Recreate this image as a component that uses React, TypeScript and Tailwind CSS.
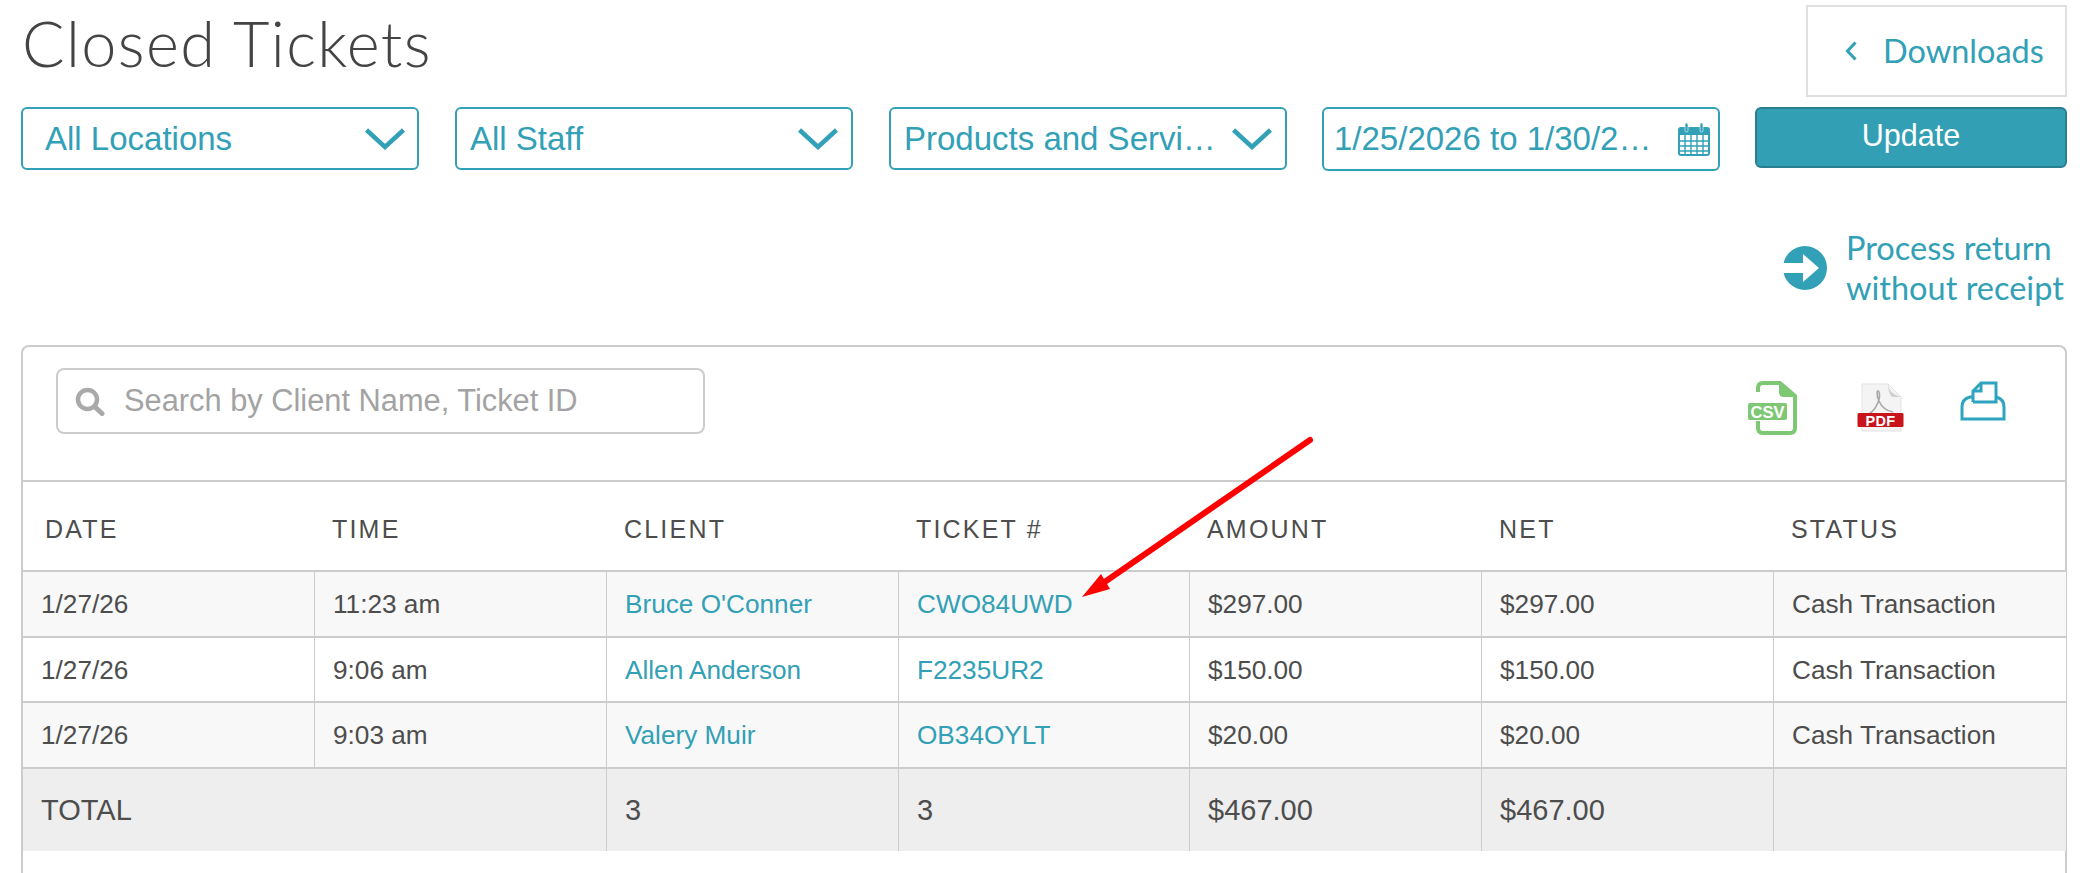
const sans = "font-['Liberation_Sans',Arial,sans-serif]";
const lato = "font-['Lato',sans-serif]";

const rows = [
  { date: "1/27/26", time: "11:23 am", client: "Bruce O'Conner", ticket: "CWO84UWD", amount: "$297.00", net: "$297.00", status: "Cash Transaction", h: "h-[66px]", bg: "bg-[#f8f8f8]" },
  { date: "1/27/26", time: "9:06 am", client: "Allen Anderson", ticket: "F2235UR2", amount: "$150.00", net: "$150.00", status: "Cash Transaction", h: "h-[65px]", bg: "bg-white" },
  { date: "1/27/26", time: "9:03 am", client: "Valery Muir", ticket: "OB34OYLT", amount: "$20.00", net: "$20.00", status: "Cash Transaction", h: "h-[66px]", bg: "bg-[#f8f8f8]" },
];

function Chevron() {
  return (
    <svg width="40" height="22" viewBox="0 0 40 22" fill="none" className="shrink-0">
      <path d="M1.5 2 L20 19 L38.5 2" stroke="#32a0b6" strokeWidth="4.5" />
    </svg>
  );
}

function SelectBox({ label, width, pad, gap }: { label: string; width: string; pad: string; gap: string }) {
  return (
    <div className={`flex h-[63px] ${width} ${pad} ${gap} items-center rounded-md border-2 border-[#32a0b6] bg-white text-[33px] text-[#32a0b6] ${sans}`}>
      <span className="min-w-0 flex-1 truncate">{label}</span>
      <Chevron />
    </div>
  );
}

function CalendarIcon() {
  return (
    <svg width="32" height="33" viewBox="0 0 32 33" className="shrink-0">
      <rect x="1" y="5" width="30" height="27" rx="2" fill="none" stroke="#32a0b6" strokeWidth="2" />
      <rect x="1" y="5" width="30" height="7" fill="#32a0b6" />
      <rect x="7" y="0" width="3" height="9" rx="1.5" fill="#32a0b6" stroke="#fff" strokeWidth="0.6" />
      <rect x="22" y="0" width="3" height="9" rx="1.5" fill="#32a0b6" stroke="#fff" strokeWidth="0.6" />
      <path d="M7 12v19M13 12v19M19 12v19M25 12v19M1 18h30M1 23h30M1 28h30" stroke="#32a0b6" strokeWidth="1.4" />
    </svg>
  );
}

function SearchIcon() {
  return (
    <svg width="30" height="29" viewBox="0 0 30 29" fill="none" className="shrink-0">
      <circle cx="12.5" cy="12.5" r="9.5" stroke="#a9a9a9" strokeWidth="4.5" />
      <path d="M19.5 19.5 L27 26.5" stroke="#a9a9a9" strokeWidth="5" strokeLinecap="round" />
    </svg>
  );
}

function CsvIcon() {
  return (
    <svg width="50" height="54" viewBox="0 0 50 54" className="shrink-0">
      <path d="M10 11 V7 Q10 2 15 2 H32 L47 15 V47 Q47 52 42 52 H15 Q10 52 10 47 V40" fill="none" stroke="#7ec774" strokeWidth="4" />
      <path d="M31 1 L48 16 H36 Q31 16 31 11 Z" fill="#7ec774" />
      <rect x="0" y="22" width="39" height="17" rx="2" fill="#7ec774" />
      <text x="19.5" y="36.5" textAnchor="middle" fontFamily="Liberation Sans, Arial, sans-serif" fontWeight="700" fontSize="16.5" fill="#fff">CSV</text>
    </svg>
  );
}

function PdfIcon() {
  return (
    <svg width="48" height="50" viewBox="0 0 48 50" className="shrink-0">
      <path d="M5 1 H31 L44 14 V48 H5 Z" fill="#f4f4f4" stroke="#e2e2e2" strokeWidth="1" />
      <path d="M31 1 Q32 11 44 14 L35 14 Q31 10 31 1 Z" fill="#d0d0d0" />
      <path d="M12 31 C20 26 24 14 22 9 C20 5 19 12 22 18 C25 25 30 28 36 29" fill="none" stroke="#a8a8a8" strokeWidth="1.6" />
      <rect x="0.5" y="30" width="46" height="14" rx="1.5" fill="#c8141b" />
      <text x="23.5" y="42.5" textAnchor="middle" fontFamily="Liberation Sans, Arial, sans-serif" fontWeight="700" fontSize="14.5" letterSpacing="0.4" fill="#fff">PDF</text>
    </svg>
  );
}

function PrinterIcon() {
  return (
    <svg width="46" height="40" viewBox="0 0 46 40" fill="none" className="shrink-0">
      <path d="M13 21 V10 L21 2 H36 V21 H13" stroke="#2ea4c0" strokeWidth="3" />
      <path d="M13 10 H21 V2" stroke="#2ea4c0" strokeWidth="3" />
      <path d="M12 16 H10 Q2 18 2 26 V38 H44 V26 Q44 18 36 16" stroke="#2ea4c0" strokeWidth="3" />
    </svg>
  );
}

function ArrowCircle() {
  return (
    <svg width="44" height="44" viewBox="0 0 44 44" className="shrink-0">
      <circle cx="22" cy="22" r="22" fill="#32a0b6" />
      <path d="M0 17 H20 V8 L36 22 L20 36 V27 H0 Z" fill="#fff" />
    </svg>
  );
}

export default function App() {
  return (
    <div className={`relative flex h-[873px] w-[2080px] flex-col overflow-hidden bg-white pl-[21px] pr-[13px] text-[#4d4d4d] ${sans}`}>
      <header className="flex items-start justify-between pt-[5px]">
        <h1 className={`pl-[1px] text-[63px] leading-[76px] font-light tracking-[1.4px] text-[#444444] ${lato}`}>Closed Tickets</h1>
        <a className={`flex h-[92px] w-[261px] items-center gap-[26px] border-2 border-[#e0e0e0] pl-[37px] text-[32.5px] text-[#32a0b6] ${lato}`}>
          <svg width="12" height="20" viewBox="0 0 12 20" fill="none" className="shrink-0">
            <path d="M10.5 1.5 L2.5 10 L10.5 18.5" stroke="#32a0b6" strokeWidth="3" />
          </svg>
          Downloads
        </a>
      </header>

      <div className="mt-[10px] flex items-start">
        <SelectBox label="All Locations" width="w-[398px]" pad="pl-[22px] pr-[12px]" gap="gap-3" />
        <div className="ml-[36px]">
          <SelectBox label="All Staff" width="w-[398px]" pad="pl-[13px] pr-[13px]" gap="gap-3" />
        </div>
        <div className="ml-[36px]">
          <SelectBox label="Products and Services" width="w-[398px]" pad="pl-[13px] pr-[13px]" gap="gap-[14px]" />
        </div>
        <div className={`ml-[35px] flex h-[64px] w-[398px] items-center gap-[21px] rounded-md border-2 border-[#32a0b6] bg-white pl-[10px] pr-[8px] text-[33px] text-[#32a0b6]`}>
          <span className="min-w-0 flex-1 truncate">1/25/2026 to 1/30/2026</span>
          <CalendarIcon />
        </div>
        <button className="ml-[35px] h-[61px] w-[312px] rounded-md border-2 border-[#277f91] bg-[#339fb5] pb-[3px] text-[30.5px] text-white">
          Update
        </button>
      </div>

      <div className={`flex justify-end pr-[4px] pt-[57px] text-[32.5px] leading-[40px] text-[#32a0b6] ${lato}`}>
        <a className="flex w-[280px] items-center gap-[19px]">
          <ArrowCircle />
          <span className="whitespace-nowrap">
            Process return
            <br />
            without receipt
          </span>
        </a>
      </div>

      <section className="mt-[37px] flex min-h-0 flex-1 flex-col rounded-t-lg border-2 border-b-0 border-[#cccccc]">
        <div className="flex h-[133px] items-start justify-between">
          <div className="ml-[33px] mt-[21px] flex h-[66px] w-[649px] items-center gap-[19px] rounded-lg border-2 border-[#cccccc] pl-[17px] text-[30.8px] text-[#a3a3a3]">
            <SearchIcon />
            Search by Client Name, Ticket ID
          </div>
          <div className="mr-[59px] mt-[34px] flex items-start">
            <CsvIcon />
            <div className="ml-[59px] mt-[2px]">
              <PdfIcon />
            </div>
            <div className="ml-[55px]">
              <PrinterIcon />
            </div>
          </div>
        </div>

        <table className="w-full table-fixed border-separate border-spacing-0">
          <colgroup>
            <col className="w-[291px]" />
            <col className="w-[292px]" />
            <col className="w-[292px]" />
            <col className="w-[291px]" />
            <col className="w-[292px]" />
            <col className="w-[292px]" />
            <col className="w-[293px]" />
          </colgroup>
          <thead>
            <tr className="h-[90px] text-left text-[25px] tracking-[2.2px] text-[#4d4d4d]">
              <th className="border-t-2 border-[#cccccc] pl-[22px] pt-[8px] font-normal">DATE</th>
              {["TIME", "CLIENT", "TICKET #", "AMOUNT", "NET", "STATUS"].map((h) => (
                <th key={h} className="border-t-2 border-[#cccccc] pl-[18px] pt-[8px] font-normal">{h}</th>
              ))}
            </tr>
          </thead>
          <tbody className="text-[26.2px]">
            {rows.map((r) => (
              <tr key={r.ticket} className={`${r.h} ${r.bg}`}>
                <td className="border-t-2 border-[#cccccc] pl-[18px] pt-[2px]">{r.date}</td>
                <td className="border-l border-t-2 border-[#cccccc] pl-[18px] pt-[2px]">{r.time}</td>
                <td className="border-l border-t-2 border-[#cccccc] pl-[18px] pt-[2px] text-[#32a0b6]">{r.client}</td>
                <td className="border-l border-t-2 border-[#cccccc] pl-[18px] pt-[2px] text-[#32a0b6]">{r.ticket}</td>
                <td className="border-l border-t-2 border-[#cccccc] pl-[18px] pt-[2px]">{r.amount}</td>
                <td className="border-l border-t-2 border-[#cccccc] pl-[18px] pt-[2px]">{r.net}</td>
                <td className="border-l border-t-2 border-[#cccccc] pl-[18px] pt-[2px]">{r.status}</td>
              </tr>
            ))}
            <tr className="h-[84px] bg-[#eeeeee] text-[29px]">
              <td colSpan={2} className="border-t-2 border-[#cccccc] pl-[18px] pt-[2px]">TOTAL</td>
              <td className="border-l border-t-2 border-[#cccccc] pl-[18px] pt-[2px]">3</td>
              <td className="border-l border-t-2 border-[#cccccc] pl-[18px] pt-[2px]">3</td>
              <td className="border-l border-t-2 border-[#cccccc] pl-[18px] pt-[2px]">$467.00</td>
              <td className="border-l border-t-2 border-[#cccccc] pl-[18px] pt-[2px]">$467.00</td>
              <td className="border-l border-t-2 border-[#cccccc] pl-[18px]"></td>
            </tr>
          </tbody>
        </table>
      </section>

      {/* red annotation arrow drawn over the table */}
      <svg width="260" height="180" viewBox="0 0 260 180" className="absolute left-[1070px] top-[430px]">
        <path d="M240 10 L26 158" stroke="#ff0000" strokeWidth="6" strokeLinecap="round" />
        <path d="M12 167 L31 144 L40 159 Z" fill="#ff0000" />
      </svg>
    </div>
  );
}
